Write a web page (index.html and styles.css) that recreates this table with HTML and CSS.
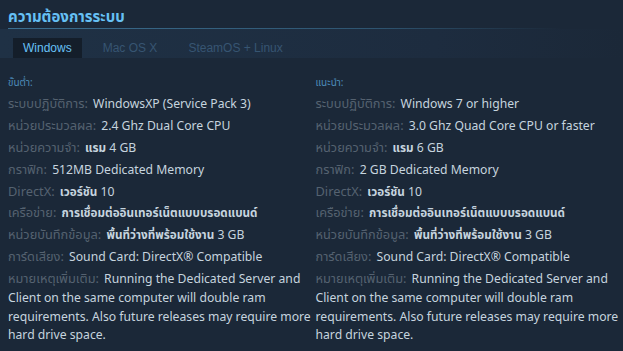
FILE: index.html
```html
<!DOCTYPE html>
<html lang="th">
<head>
<meta charset="utf-8">
<link rel="stylesheet" href="styles.css">
</head>
<body>
<div class="page">
  <h2 class="title">ความต้องการระบบ</h2>
  <div class="tabs">
    <div class="tab active">Windows</div>
    <div class="tab">Mac OS X</div>
    <div class="tab">SteamOS + Linux</div>
  </div>
  <div class="cols">
    <div class="col">
      <div class="head">ขั้นต่ำ:</div>
      <ul class="reqs">
        <li><span class="lb">ระบบปฏิบัติการ:</span> WindowsXP (Service Pack 3)</li>
        <li><span class="lb">หน่วยประมวลผล:</span> 2.4 Ghz Dual Core CPU</li>
        <li><span class="lb">หน่วยความจำ:</span> <span class="th">แรม</span> 4 GB</li>
        <li><span class="lb">กราฟิก:</span> 512MB Dedicated Memory</li>
        <li><span class="lb">DirectX:</span> <span class="th">เวอร์ชัน</span> 10</li>
        <li><span class="lb">เครือข่าย:</span> <span class="th">การเชื่อมต่ออินเทอร์เน็ตแบบบรอดแบนด์</span></li>
        <li><span class="lb">หน่วยบันทึกข้อมูล:</span> <span class="th">พื้นที่ว่างที่พร้อมใช้งาน</span> 3 GB</li>
        <li><span class="lb">การ์ดเสียง:</span> Sound Card: DirectX® Compatible</li>
        <li><span class="lb">หมายเหตุเพิ่มเติม:</span> Running the Dedicated Server and Client on the same computer will double ram requirements. Also future releases may require more hard drive space.</li>
      </ul>
    </div>
    <div class="col">
      <div class="head">แนะนำ:</div>
      <ul class="reqs">
        <li><span class="lb">ระบบปฏิบัติการ:</span> Windows 7 or higher</li>
        <li><span class="lb">หน่วยประมวลผล:</span> 3.0 Ghz Quad Core CPU or faster</li>
        <li><span class="lb">หน่วยความจำ:</span> <span class="th">แรม</span> 6 GB</li>
        <li><span class="lb">กราฟิก:</span> 2 GB Dedicated Memory</li>
        <li><span class="lb">DirectX:</span> <span class="th">เวอร์ชัน</span> 10</li>
        <li><span class="lb">เครือข่าย:</span> <span class="th">การเชื่อมต่ออินเทอร์เน็ตแบบบรอดแบนด์</span></li>
        <li><span class="lb">หน่วยบันทึกข้อมูล:</span> <span class="th">พื้นที่ว่างที่พร้อมใช้งาน</span> 3 GB</li>
        <li><span class="lb">การ์ดเสียง:</span> Sound Card: DirectX® Compatible</li>
        <li><span class="lb">หมายเหตุเพิ่มเติม:</span> Running the Dedicated Server and Client on the same computer will double ram requirements. Also future releases may require more hard drive space.</li>
      </ul>
    </div>
  </div>
</div>
</body>
</html>
```
FILE: styles.css
```css
html, body {
  margin: 0;
  padding: 0;
  background: #1b2838;
  height: 100%;
}
.page {
  padding: 0 0 0 8px;
  font-family: "Noto Sans", "Noto Sans Thai", "Noto Sans Thai UI", "DejaVu Sans", sans-serif;
  color: #c6d4df;
}
.title {
  margin: 0;
  padding-top: 6px;
  height: 22px;
  font-size: 15px;
  font-weight: bold;
  color: #66c0f4;
  line-height: 20px;
  border-bottom: 1px solid transparent;
  border-image: linear-gradient(to right, #3b6e8f 0%, #2e5470 60%, rgba(27,40,56,0) 90%) 1;
}
.tabs {
  display: flex;
  align-items: flex-end;
  height: 29px;
  margin-left: -8px;
  padding-left: 13px;
  background: linear-gradient(to right, #1f3145 0%, #1d2c3f 70%, #1b2838 100%);
}
.tab {
  font-family: "Liberation Sans", Arial, sans-serif;
  font-size: 12px;
  color: #375572;
  height: 20px;
  line-height: 20px;
  padding: 0 10px;
  margin-right: 11px;
}
.tab.active {
  background: #141e2a;
  color: #67c1f5;
}
.cols {
  display: flex;
  padding-top: 16px;
}
.col {
  width: 308px;
}
.head {
  font-size: 10px;
  color: #4d8cba;
  line-height: 16px;
  margin-bottom: 5px;
}
.reqs {
  list-style: none;
  margin: 0;
  padding: 0;
  font-size: 12.2px;
  line-height: 18.7px;
}
.reqs li {
  margin-bottom: 3.2px;
}
.lb {
  color: #556270;
  font-size: 12.8px;
  line-height: 12px;
  margin-right: 2px;
}
.th {
  font-weight: bold;
  font-size: 11.7px;
  line-height: 12px;
}
```
